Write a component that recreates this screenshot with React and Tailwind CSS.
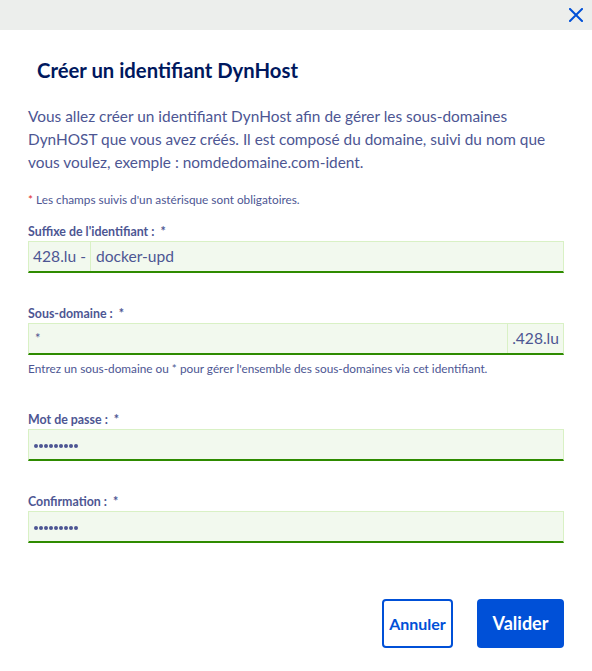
import React from "react";

const font = { fontFamily: "Lato, 'Noto Sans', sans-serif" };

function Label({ children }) {
  return (
    <div className="text-[12.4px] leading-[16px] font-bold text-[#4d5693] mb-[1px] whitespace-nowrap">
      {children} <span className="ml-[3px]">*</span>
    </div>
  );
}

function Dots() {
  return (
    <div className="flex gap-[1px] mt-[2px]">
      {[0, 1, 2, 3, 4, 5, 6, 7, 8].map((i) => (
        <span key={i} className="w-[4px] h-[4px] rounded-full bg-[#4d5693]" />
      ))}
    </div>
  );
}

function Field({ prefix, value, suffix }) {
  return (
    <div className="flex h-[32px] bg-[#f2f9ee] border border-[#d9f1c5] border-b-2 border-b-[#2e8b00] text-[15.6px] text-[#4d5693]">
      {prefix && (
        <div className="flex items-center pl-[4px] pr-[4px] border-r border-[#d9f1c5]">{prefix}</div>
      )}
      <div className="flex-1 flex items-center px-[5px]">{value}</div>
      {suffix && (
        <div className="flex items-center px-[4px] border-l border-[#d9f1c5]">{suffix}</div>
      )}
    </div>
  );
}

export default function App() {
  return (
    <div className="w-[592px] h-[671px] bg-white relative overflow-hidden" style={font}>
      <div className="h-[30px] bg-[#eceeec] flex items-center justify-end pr-[9px]">
        <svg width="14" height="14" viewBox="0 0 14 14" className="text-[#0050d7]">
          <path d="M1 1 L13 13 M13 1 L1 13" stroke="currentColor" strokeWidth="2" strokeLinecap="square" />
        </svg>
      </div>
      <div className="px-[28px]">
        <h1 className="mt-[26px] ml-[9px] text-[20.3px] leading-[28px] font-bold text-[#00185e] whitespace-nowrap">
          Créer un identifiant DynHost
        </h1>
        <p className="mt-[21px] text-[15.4px] leading-[23px] text-[#4d5693] whitespace-nowrap">
          Vous allez créer un identifiant DynHost afin de gérer les sous-domaines
          <br />
          DynHOST que vous avez créés. Il est composé du domaine, suivi du nom que
          <br />
          vous voulez, exemple : nomdedomaine.com-ident.
        </p>
        <div className="mt-[18px] text-[11.8px] leading-[16px] text-[#4d5693] whitespace-nowrap">
          <span className="text-[#e02b2b]">*</span> Les champs suivis d'un astérisque sont obligatoires.
        </div>

        <div className="mt-[16px]">
          <Label>Suffixe de l'identifiant :</Label>
          <Field prefix="428.lu -" value="docker-upd" />
        </div>

        <div className="mt-[33px]">
          <Label>Sous-domaine :</Label>
          <Field value={<span className="text-[13px] ml-[1px]">*</span>} suffix=".428.lu" />
          <div className="mt-[6px] text-[11.8px] leading-[16px] text-[#4d5693] whitespace-nowrap">
            Entrez un sous-domaine ou * pour gérer l'ensemble des sous-domaines via cet identifiant.
          </div>
        </div>

        <div className="mt-[35px]">
          <Label>Mot de passe :</Label>
          <Field value={<Dots />} />
        </div>

        <div className="mt-[33px]">
          <Label>Confirmation :</Label>
          <Field value={<Dots />} />
        </div>

        <div className="mt-[56px] flex justify-end gap-[24px]">
          <button className="h-[49px] w-[71px] border-2 border-[#0050d7] rounded-[4px] text-[#0050d7] font-bold text-[16px]">
            Annuler
          </button>
          <button className="h-[49px] w-[87px] bg-[#0050d7] rounded-[4px] text-white font-bold text-[18px]">
            Valider
          </button>
        </div>
      </div>
    </div>
  );
}
